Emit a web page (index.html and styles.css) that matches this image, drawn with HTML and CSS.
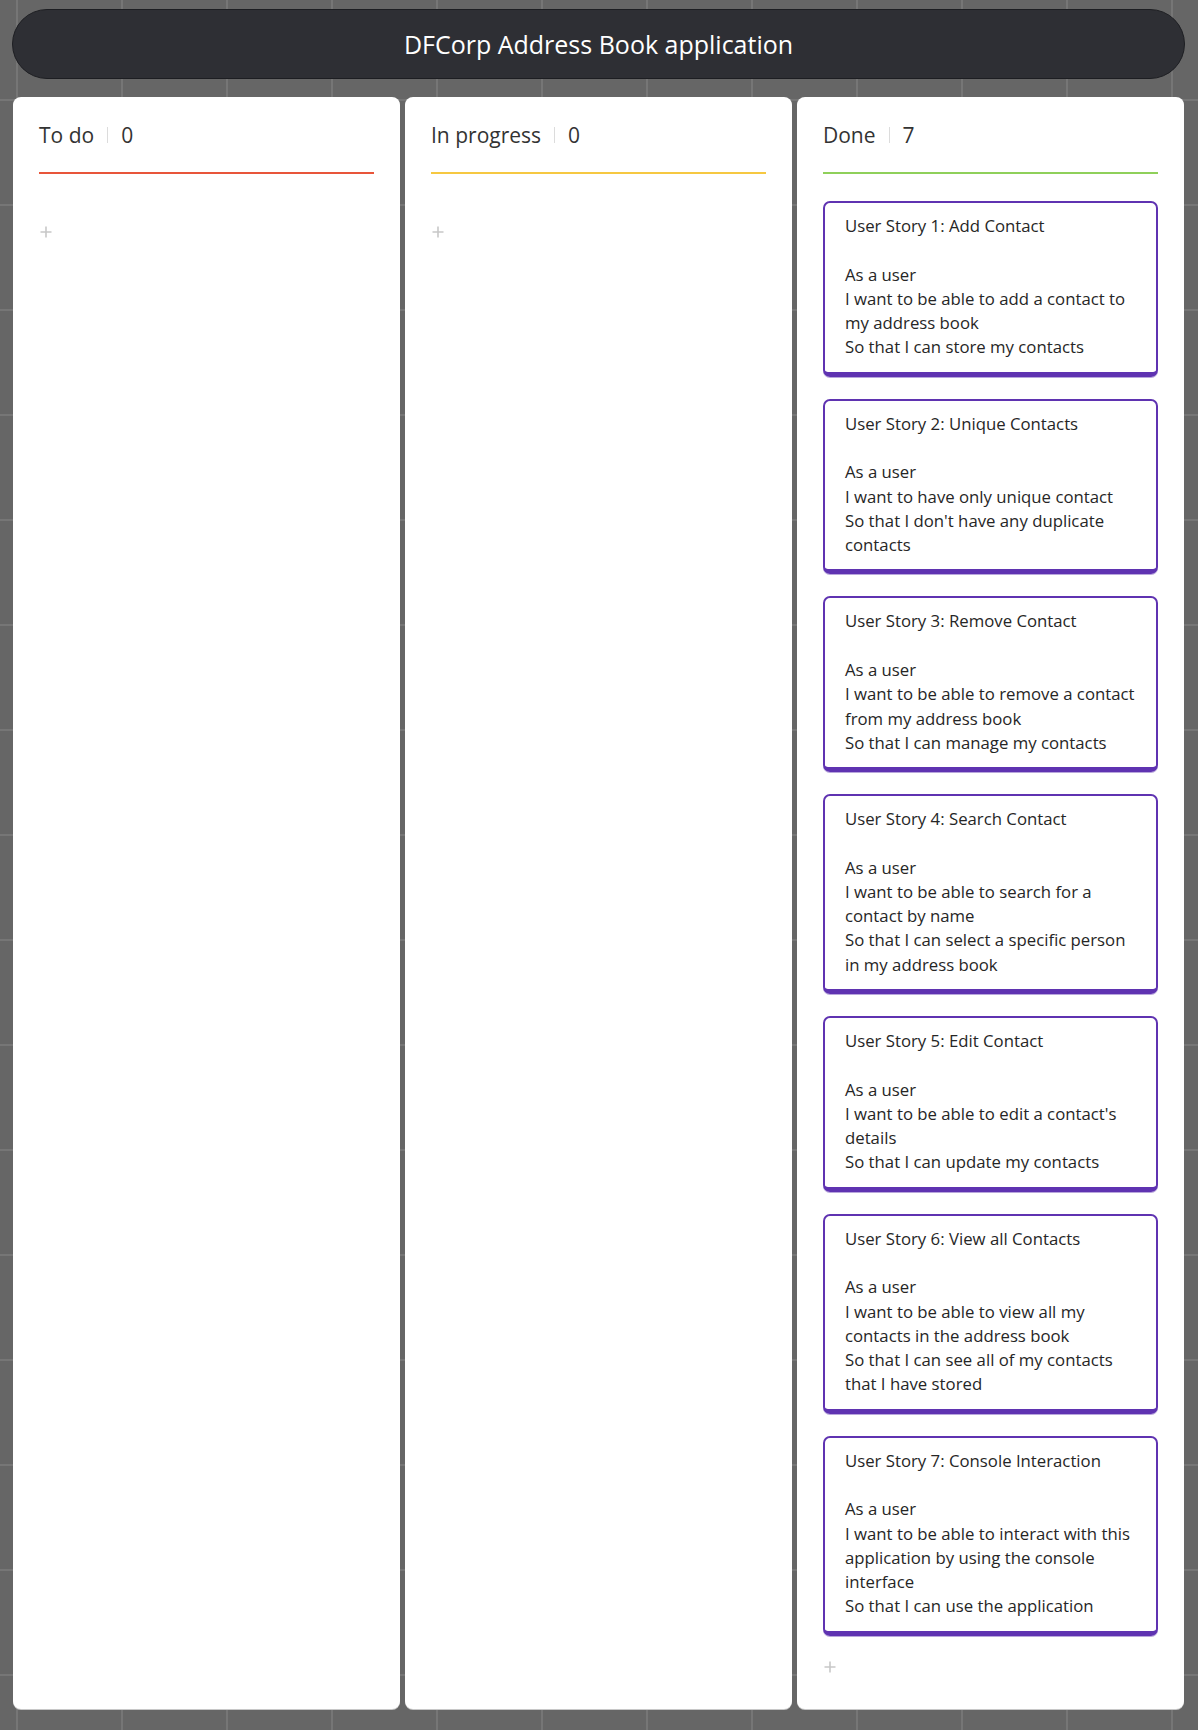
FILE: index.html
```html
<!DOCTYPE html>
<html lang="en">
<head>
<meta charset="utf-8">
<title>DFCorp Address Book application</title>
<link rel="stylesheet" href="styles.css">
</head>
<body>
<div class="page">
  <header class="topbar">
    <h1 class="topbar-title">DFCorp Address Book application</h1>
  </header>
  <main class="board">
    <section class="column">
      <div class="column-head column-head--todo">
        <span class="column-name">To do</span>
        <span class="column-sep"></span>
        <span class="column-count">0</span>
      </div>
      <div class="cards"></div>
      <div class="add"><svg width="12" height="12" viewBox="0 0 12 12"><path d="M6 0.5V11.5M0.5 6H11.5" stroke="#c8c8c8" stroke-width="1.6" fill="none"/></svg></div>
    </section>
    <section class="column">
      <div class="column-head column-head--progress">
        <span class="column-name">In progress</span>
        <span class="column-sep"></span>
        <span class="column-count">0</span>
      </div>
      <div class="cards"></div>
      <div class="add"><svg width="12" height="12" viewBox="0 0 12 12"><path d="M6 0.5V11.5M0.5 6H11.5" stroke="#c8c8c8" stroke-width="1.6" fill="none"/></svg></div>
    </section>
    <section class="column">
      <div class="column-head column-head--done">
        <span class="column-name">Done</span>
        <span class="column-sep"></span>
        <span class="column-count">7</span>
      </div>
      <div class="cards">
        <div class="card">User Story 1: Add Contact

As a user
I want to be able to add a contact to my address book
So that I can store my contacts</div>
        <div class="card">User Story 2: Unique Contacts

As a user
I want to have only unique contact
So that I don't have any duplicate contacts</div>
        <div class="card">User Story 3: Remove Contact

As a user
I want to be able to remove a contact from my address book
So that I can manage my contacts</div>
        <div class="card">User Story 4: Search Contact

As a user
I want to be able to search for a contact by name
So that I can select a specific person in my address book</div>
        <div class="card">User Story 5: Edit Contact

As a user
I want to be able to edit a contact's details
So that I can update my contacts</div>
        <div class="card">User Story 6: View all Contacts

As a user
I want to be able to view all my contacts in the address book
So that I can see all of my contacts that I have stored</div>
        <div class="card">User Story 7: Console Interaction

As a user
I want to be able to interact with this application by using the console interface
So that I can use the application</div>
      </div>
      <div class="add"><svg width="12" height="12" viewBox="0 0 12 12"><path d="M6 0.5V11.5M0.5 6H11.5" stroke="#c8c8c8" stroke-width="1.6" fill="none"/></svg></div>
    </section>
  </main>
</div>
</body>
</html>
```
FILE: styles.css
```css
* { box-sizing: border-box; }

html, body {
  margin: 0;
  padding: 0;
}

body {
  min-height: 1730px;
  font-family: "Open Sans", "Noto Sans", "Liberation Sans", sans-serif;
  color: #2b2b2b;
  background-color: #666666;
  background-image:
    linear-gradient(to right, #767676 2px, transparent 2px),
    linear-gradient(to bottom, #767676 2px, transparent 2px);
  background-size: 105px 105px;
  background-position: 16px 99px;
}

.page {
  padding: 9px 14px 20px 13px;
}

.topbar {
  height: 70px;
  margin: 0 -1px;
  border: 1px solid #1d1e22;
  border-radius: 35px;
  background: #2e2f34;
  display: flex;
  align-items: center;
  justify-content: center;
}

.topbar-title {
  margin: 0;
  font-size: 25px;
  font-weight: 400;
  color: #ffffff;
  line-height: 34px;
}

.board {
  margin-top: 18px;
  display: grid;
  grid-template-columns: repeat(3, 1fr);
  gap: 5px;
  align-items: stretch;
}

.column {
  background: #ffffff;
  border-radius: 8px;
  box-shadow: 0 1px 0 #c8c8c8;
  padding: 0 26px 32px 26px;
}

.column-head {
  display: flex;
  align-items: center;
  padding: 23px 0 22px 0;
  border-bottom: 2px solid #e6553a;
  font-size: 21px;
  line-height: 30px;
  color: #333333;
}

.column-head--todo { border-bottom-color: #e8553a; }
.column-head--progress { border-bottom-color: #f6c841; }
.column-head--done { border-bottom-color: #8fd05a; }

.column-sep {
  width: 1px;
  height: 16px;
  background: #dcdcdc;
  margin: 0 13px;
}

.cards {
  margin-top: 27px;
  display: flex;
  flex-direction: column;
  gap: 22px;
}

.card {
  border: 2px solid #5f33b1;
  border-bottom-width: 5px;
  border-radius: 7px;
  box-shadow: 0 1px 0 #b8a6dc;
  padding: 11px 16px 12px 20px;
  font-size: 16.75px;
  line-height: 1.45;
  color: #262626;
  white-space: pre-line;
}

.add {
  margin-top: 21px;
  height: 20px;
  display: flex;
  align-items: center;
  padding-left: 1px;
}

.add svg { display: block; }
```
